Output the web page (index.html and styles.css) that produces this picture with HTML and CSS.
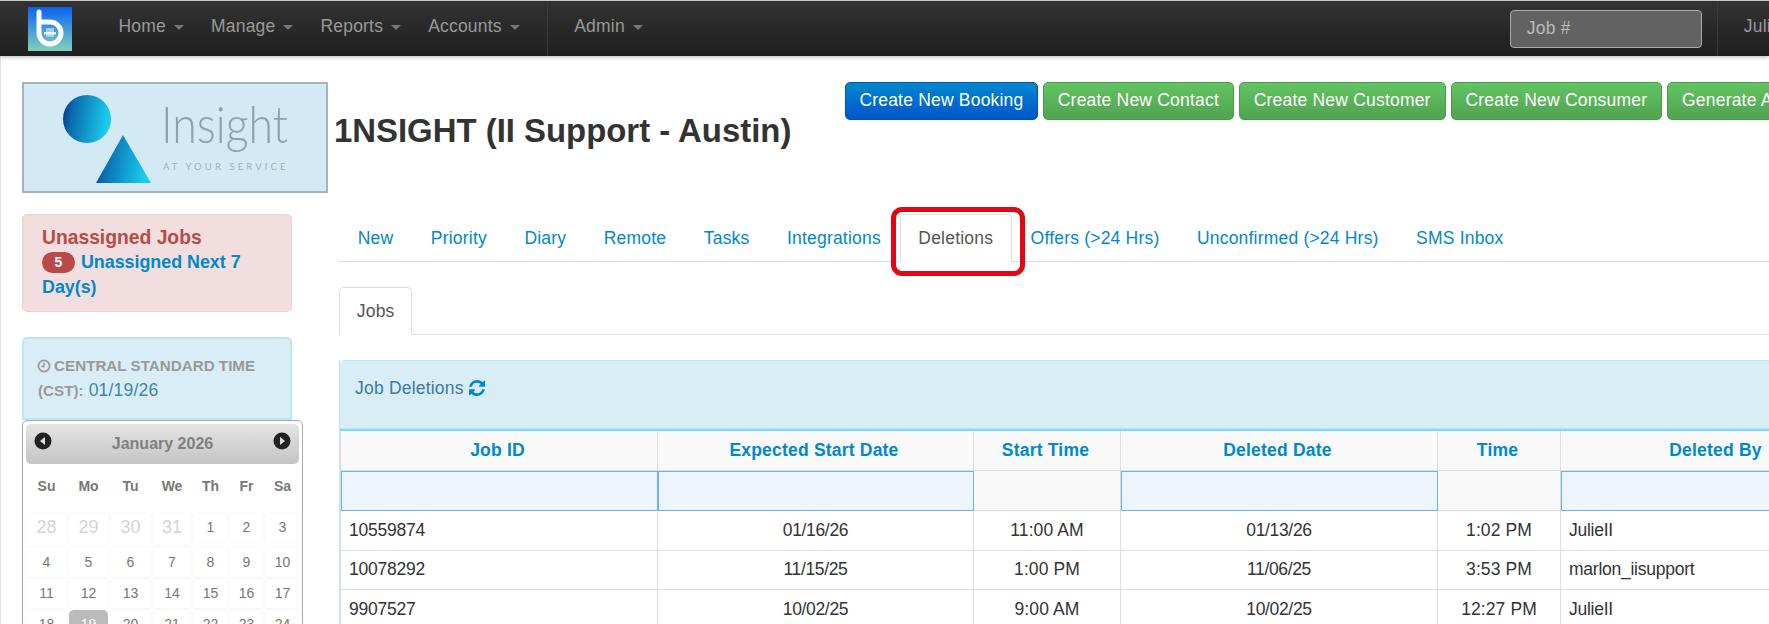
FILE: index.html
```html
<!DOCTYPE html>
<html lang="en">
<head>
<meta charset="utf-8">
<title>Job Deletions</title>
<link rel="stylesheet" href="styles.css">
</head>
<body>
<nav class="navbar">
  <svg class="brand" viewBox="0 0 44 44" width="44" height="44">
    <defs><linearGradient id="bg" x1="0" y1="0" x2="0" y2="1"><stop offset="0" stop-color="#0b62f2"/><stop offset="1" stop-color="#80d0bf"/></linearGradient></defs>
    <rect width="44" height="44" fill="url(#bg)"/>
    <path d="M11 5V26A11 11 0 1 0 22 15H13" fill="none" stroke="#fff" stroke-width="5" stroke-linecap="round"/>
    <rect x="18" y="21" width="8" height="9" fill="#cfe2f2" opacity=".7"/>
    <rect x="16" y="25" width="12" height="2.5" fill="#eef5fb"/>
  </svg>
  <a class="nav-item">Home<i class="caret"></i></a>
  <a class="nav-item">Manage<i class="caret"></i></a>
  <a class="nav-item">Reports<i class="caret"></i></a>
  <a class="nav-item nav-last">Accounts<i class="caret"></i></a>
  <span class="nav-divider"></span>
  <a class="nav-item">Admin<i class="caret"></i></a>
  <div class="nav-search">Job #</div>
  <span class="nav-divider nav-divider-right"></span>
  <a class="nav-user">JulieII</a>
</nav>

<div class="page">
  <header class="top-row">
    <svg class="company-logo" viewBox="0 0 306 111" width="306" height="111">
      <defs>
        <linearGradient id="shape" x1="0" y1="0" x2="1" y2="0.15"><stop offset="0" stop-color="#06308c"/><stop offset=".25" stop-color="#0a6cae"/><stop offset="1" stop-color="#19cdf0"/></linearGradient>
      </defs>
      <rect x="1" y="1" width="304" height="109" fill="#d3e9f4" stroke="#a2b3bb" stroke-width="2"/>
      <circle cx="65" cy="37" r="24" fill="url(#shape)"/>
      <path d="M101 53L129 101H74Z" fill="url(#shape)"/>
      <text x="139" y="61" class="logo-word" textLength="127" lengthAdjust="spacingAndGlyphs">Insight</text>
      <text x="141" y="88" class="logo-tag">AT YOUR SERVICE</text>
    </svg>
    <h1 class="title">1NSIGHT (II Support - Austin)</h1>
    <div class="actions">
      <a class="btn btn-blue">Create New Booking</a>
      <a class="btn">Create New Contact</a>
      <a class="btn">Create New Customer</a>
      <a class="btn">Create New Consumer</a>
      <a class="btn">Generate API Key</a>
    </div>
  </header>

  <div class="columns">
    <aside class="sidebar">
      <div class="alert">
        <div class="alert-title">Unassigned Jobs</div>
        <div class="alert-link"><span class="badge">5</span> Unassigned Next 7 Day(s)</div>
      </div>
      <div class="time-box">
        <svg class="clock" viewBox="0 0 14 14" width="14" height="14"><circle cx="7" cy="7" r="5.6" fill="none" stroke="#999" stroke-width="1.8"/><path d="M7 3.6V7.4H4.2" fill="none" stroke="#999" stroke-width="1.5"/></svg>
        <span class="tz">CENTRAL STANDARD TIME (CST):</span> <span class="tz-date">01/19/26</span>
      </div>
      <div class="calendar">
        <div class="cal-head">
          <svg class="cal-arrow" viewBox="0 0 18 18" width="18" height="18"><circle cx="9" cy="9" r="8.5" fill="#222"/><path d="M11 5V13L6 9Z" fill="#ddd"/></svg>
          <span class="cal-title">January 2026</span>
          <svg class="cal-arrow" viewBox="0 0 18 18" width="18" height="18"><circle cx="9" cy="9" r="8.5" fill="#222"/><path d="M7 5V13L12 9Z" fill="#ddd"/></svg>
        </div>
        <div class="cal-grid cal-names">
          <span>Su</span><span>Mo</span><span>Tu</span><span>We</span><span>Th</span><span>Fr</span><span>Sa</span>
        </div>
        <div class="cal-grid cal-days">
          <span class="off">28</span><span class="off">29</span><span class="off">30</span><span class="off">31</span><span>1</span><span>2</span><span>3</span>
          <span>4</span><span>5</span><span>6</span><span>7</span><span>8</span><span>9</span><span>10</span>
          <span>11</span><span>12</span><span>13</span><span>14</span><span>15</span><span>16</span><span>17</span>
          <span>18</span><span class="today">19</span><span>20</span><span>21</span><span>22</span><span>23</span><span>24</span>
        </div>
      </div>
    </aside>

    <main class="main">
      <ul class="tabs">
        <li><a>New</a></li>
        <li><a>Priority</a></li>
        <li><a>Diary</a></li>
        <li><a>Remote</a></li>
        <li><a>Tasks</a></li>
        <li><a>Integrations</a></li>
        <li class="active"><a>Deletions</a><span class="highlight"></span></li>
        <li><a>Offers (&gt;24 Hrs)</a></li>
        <li><a>Unconfirmed (&gt;24 Hrs)</a></li>
        <li><a>SMS Inbox</a></li>
      </ul>
      <ul class="tabs tabs-sub">
        <li class="active"><a>Jobs</a></li>
      </ul>
      <section class="panel">
        <div class="panel-head">Job Deletions
          <svg class="refresh" viewBox="0 0 1536 1536" width="16" height="16"><path fill="#0088cc" d="M1511 928q0 5-1 7-64 268-268 434.5t-478 166.5q-146 0-282.5-55t-243.5-157l-129 129q-19 19-45 19t-45-19-19-45v-448q0-26 19-45t45-19h448q26 0 45 19t19 45-19 45l-137 137q71 66 161 102t187 36q134 0 250-65t186-179q11-17 53-117 8-23 30-23h192q13 0 22.5 9.5t9.5 22.5zm25-800v448q0 26-19 45t-45 19h-448q-26 0-45-19t-19-45 19-45l138-138q-148-137-349-137-134 0-250 65t-186 179q-11 17-53 117-8 23-30 23h-199q-13 0-22.5-9.5t-9.5-22.5v-7q65-268 270-434.5t480-166.5q146 0 284 55.5t245 156.5l130-129q19-19 45-19t45 19 19 45z"/></svg>
        </div>
        <table class="grid">
          <colgroup>
            <col class="c1"><col class="c2"><col class="c3"><col class="c4"><col class="c5"><col class="c6">
          </colgroup>
          <thead>
            <tr><th>Job ID</th><th>Expected Start Date</th><th>Start Time</th><th>Deleted Date</th><th>Time</th><th>Deleted By</th></tr>
            <tr class="filters"><td class="f"></td><td class="f"></td><td></td><td class="f"></td><td></td><td class="f"></td></tr>
          </thead>
          <tbody>
            <tr><td>10559874</td><td class="date">01/16/26</td><td class="time">11:00 AM</td><td class="date">01/13/26</td><td class="time">1:02 PM</td><td>JulieII</td></tr>
            <tr><td>10078292</td><td class="date">11/15/25</td><td class="time">1:00 PM</td><td class="date">11/06/25</td><td class="time">3:53 PM</td><td>marlon_iisupport</td></tr>
            <tr><td>9907527</td><td class="date">10/02/25</td><td class="time">9:00 AM</td><td class="date">10/02/25</td><td class="time">12:27 PM</td><td>JulieII</td></tr>
          </tbody>
        </table>
      </section>
    </main>
  </div>
</div>
</body>
</html>
```
FILE: styles.css
```css
* { box-sizing: border-box; }
html, body { margin: 0; height: 100%; overflow: hidden; }
body {
  width: 1769px;
  height: 624px;
  background: #fff;
  color: #333;
  font-family: "Liberation Sans", Arial, sans-serif;
  font-size: 17.5px;
  letter-spacing: .2px;
  border-top: 1px solid #c8c8c8;
}
a { color: #0088cc; text-decoration: none; }

.navbar {
  display: flex;
  align-items: center;
  height: 55px;
  padding-left: 28px;
  background: linear-gradient(#333, #1f1f1f);
  box-shadow: 0 1px 4px rgba(0,0,0,.3);
  white-space: nowrap;
  position: relative;
}
.brand { flex: none; margin-right: 46.5px; }
.nav-item { color: #999; flex: none; margin-right: 27px; margin-bottom: 4px; display: flex; align-items: center; }
.nav-last { margin-right: 27.5px; }
.caret {
  display: inline-block;
  width: 0; height: 0;
  margin-left: 8px;
  margin-top: 2px;
  border-left: 5px solid transparent;
  border-right: 5px solid transparent;
  border-top: 5px solid #777;
}
.nav-divider { width: 1px; align-self: stretch; background: #3a3a3a; flex: none; margin-right: 26px; }
.nav-search {
  flex: none;
  width: 192px;
  height: 38px;
  margin-left: 840px;
  padding: 7px 16px;
  background: #626262;
  border: 1px solid #aaa;
  border-radius: 4px;
  color: #bbb;
}
.nav-divider-right { margin-left: 15px; }
.nav-user { color: #999; flex: none; margin-bottom: 4px; }

.page { padding: 26px 0 0 22px; box-shadow: inset 1px 0 0 #e5e5e5; height: 568px; }
.top-row { display: flex; align-items: flex-start; height: 111px; white-space: nowrap; }
.company-logo { flex: none; letter-spacing: 0; }
.logo-word { font-family: Lato, "Open Sans", sans-serif; font-weight: 300; font-size: 52px; fill: #8aa2b1; }
.logo-tag { font-family: Lato, "Open Sans", sans-serif; font-size: 9.5px; letter-spacing: 3.1px; fill: #9bb2c0; }
.title { flex: none; margin: 30px 0 0 6px; width: 511px; font-size: 32.9px; line-height: 38px; font-weight: bold; color: #333; letter-spacing: 0; }
.actions { flex: none; display: flex; gap: 5px; }
.btn {
  flex: none;
  height: 38px;
  line-height: 35px;
  padding: 0 13.9px;
  color: #fff;
  border: 1px solid #4a9a4a;
  border-radius: 5px;
  background: linear-gradient(#62c462, #51a351);
  box-shadow: 0 1px 2px rgba(0,0,0,.06);
}
.btn-blue { padding: 0 13.4px; background: linear-gradient(#0088cc, #0055cc); border-color: #0055aa; }

.columns { display: flex; margin-top: 21px; }
.sidebar { flex: none; width: 270px; margin-right: 47px; }
.alert {
  height: 98px;
  padding: 10px 19px;
  background: #f2dede;
  border: 1px solid #ebd2d4;
  border-radius: 5px;
  line-height: 25px;
  font-weight: bold;
  letter-spacing: 0;
}
.alert-title { color: #b94a48; font-size: 19.3px; }
.alert-link { color: #0088cc; font-size: 17.85px; }
.badge {
  display: inline-block;
  width: 33px;
  height: 21px;
  border-radius: 11px;
  background: #b94a48;
  color: #fff;
  text-align: center;
  font-size: 14px;
  line-height: 21px;
  vertical-align: 1px;
  margin-right: 1px;
}
.time-box {
  height: 83px;
  margin-top: 25px;
  padding: 14px 14px 0;
  background: #d9edf7;
  border: 2px solid #bce8f1;
  border-radius: 5px 5px 0 0;
  line-height: 25px;
  color: #3b85b3;
}
.clock { vertical-align: -2px; margin: 0 -2px 0 -1px; }
.tz { color: #999; font-weight: bold; font-size: 15.2px; letter-spacing: 0; }
.tz-date { font-size: 17.5px; }

.calendar {
  width: 281px;
  height: 260px;
  padding: 3px;
  background: #fff;
  border: 1px solid #aaa;
  border-radius: 5px;
  letter-spacing: 0;
}
.cal-head {
  display: flex;
  align-items: center;
  justify-content: space-between;
  height: 40px;
  padding: 0 8px 6px 8px;
  border-radius: 5px;
  background: linear-gradient(#e4e4e4, #c4c4c4);
}
.cal-title { color: #808080; font-weight: bold; font-size: 16px; padding-top: 6px; }
.cal-arrow { flex: none; }
.cal-grid { display: grid; grid-template-columns: 39px 39px 39px 38px 33px 33px 33px; column-gap: 3px; padding-left: 1px; text-align: center; }
.cal-names { margin-top: 10px; height: 39px; font-size: 14px; font-weight: bold; color: #777; line-height: 24px; }
.cal-days { row-gap: 2px; grid-template-rows: 33px 29px 29px 29px; font-size: 14px; color: #777; line-height: 29px; align-items: start; }
.cal-days span { height: 29px; box-shadow: 0 0 2px #f0f0f0; }
.cal-days .off { color: #d4d4d4; font-size: 18px; height: 32px; }
.cal-days .today { background: #bbb; color: #fff; border-radius: 5px 5px 0 0; }

.main { flex: none; width: 1600px; }
.tabs {
  display: flex;
  list-style: none;
  margin: 0;
  padding: 0;
  height: 48px;
  border-bottom: 1px solid #ddd;
}
.tabs li { position: relative; height: 48px; }
.tabs a {
  display: block;
  height: 48px;
  padding: 0 17.75px;
  line-height: 46px;
  border: 1px solid transparent;
  border-radius: 5px 5px 0 0;
}
.tabs .active a { color: #555; border-color: #ddd; border-bottom-color: #fff; background: #fff; }
.highlight {
  position: absolute;
  left: -9px;
  top: -7px;
  width: 134px;
  height: 69px;
  border: 5px solid #e30613;
  border-radius: 11px;
  pointer-events: none;
}
.tabs-sub { margin-top: 25px; }
.tabs-sub a { padding: 0 16.75px; }
.panel { margin-top: 25px; border-left: 1px solid #bce8f1; }
.panel-head {
  height: 69px;
  padding: 15px 15px;
  background: #d9edf7;
  border: 1px solid #bce8f1;
  border-left: 0;
  border-radius: 5px 5px 0 0;
  color: #3a7ba3;
  line-height: 25px;
}
.refresh { vertical-align: -2px; }
.grid { border-collapse: collapse; table-layout: fixed; width: 1533px; border-top: 2px solid #7fd9f5; }
.c1 { width: 317px; } .c2 { width: 316px; } .c3 { width: 147px; } .c4 { width: 317px; } .c5 { width: 123px; } .c6 { width: 313px; }
.grid th, .grid td { height: 39.5px; padding: 0 8px; border: 1px solid #ddd; font-weight: normal; }
.grid td { letter-spacing: -.25px; }
.grid th { height: 40.5px; padding: 0 10px 0 7px; background: #f9f9f9; color: #0088cc; font-weight: bold; text-align: center; }
.filters td { height: 40px; background: #f9f9f9; }
.filters td.f { background: #edf5fc; outline: 1px solid #6db3ea; outline-offset: -1px; }
.grid .date { text-align: center; letter-spacing: -.35px; }
.grid .time { text-align: center; letter-spacing: .1px; }
```
